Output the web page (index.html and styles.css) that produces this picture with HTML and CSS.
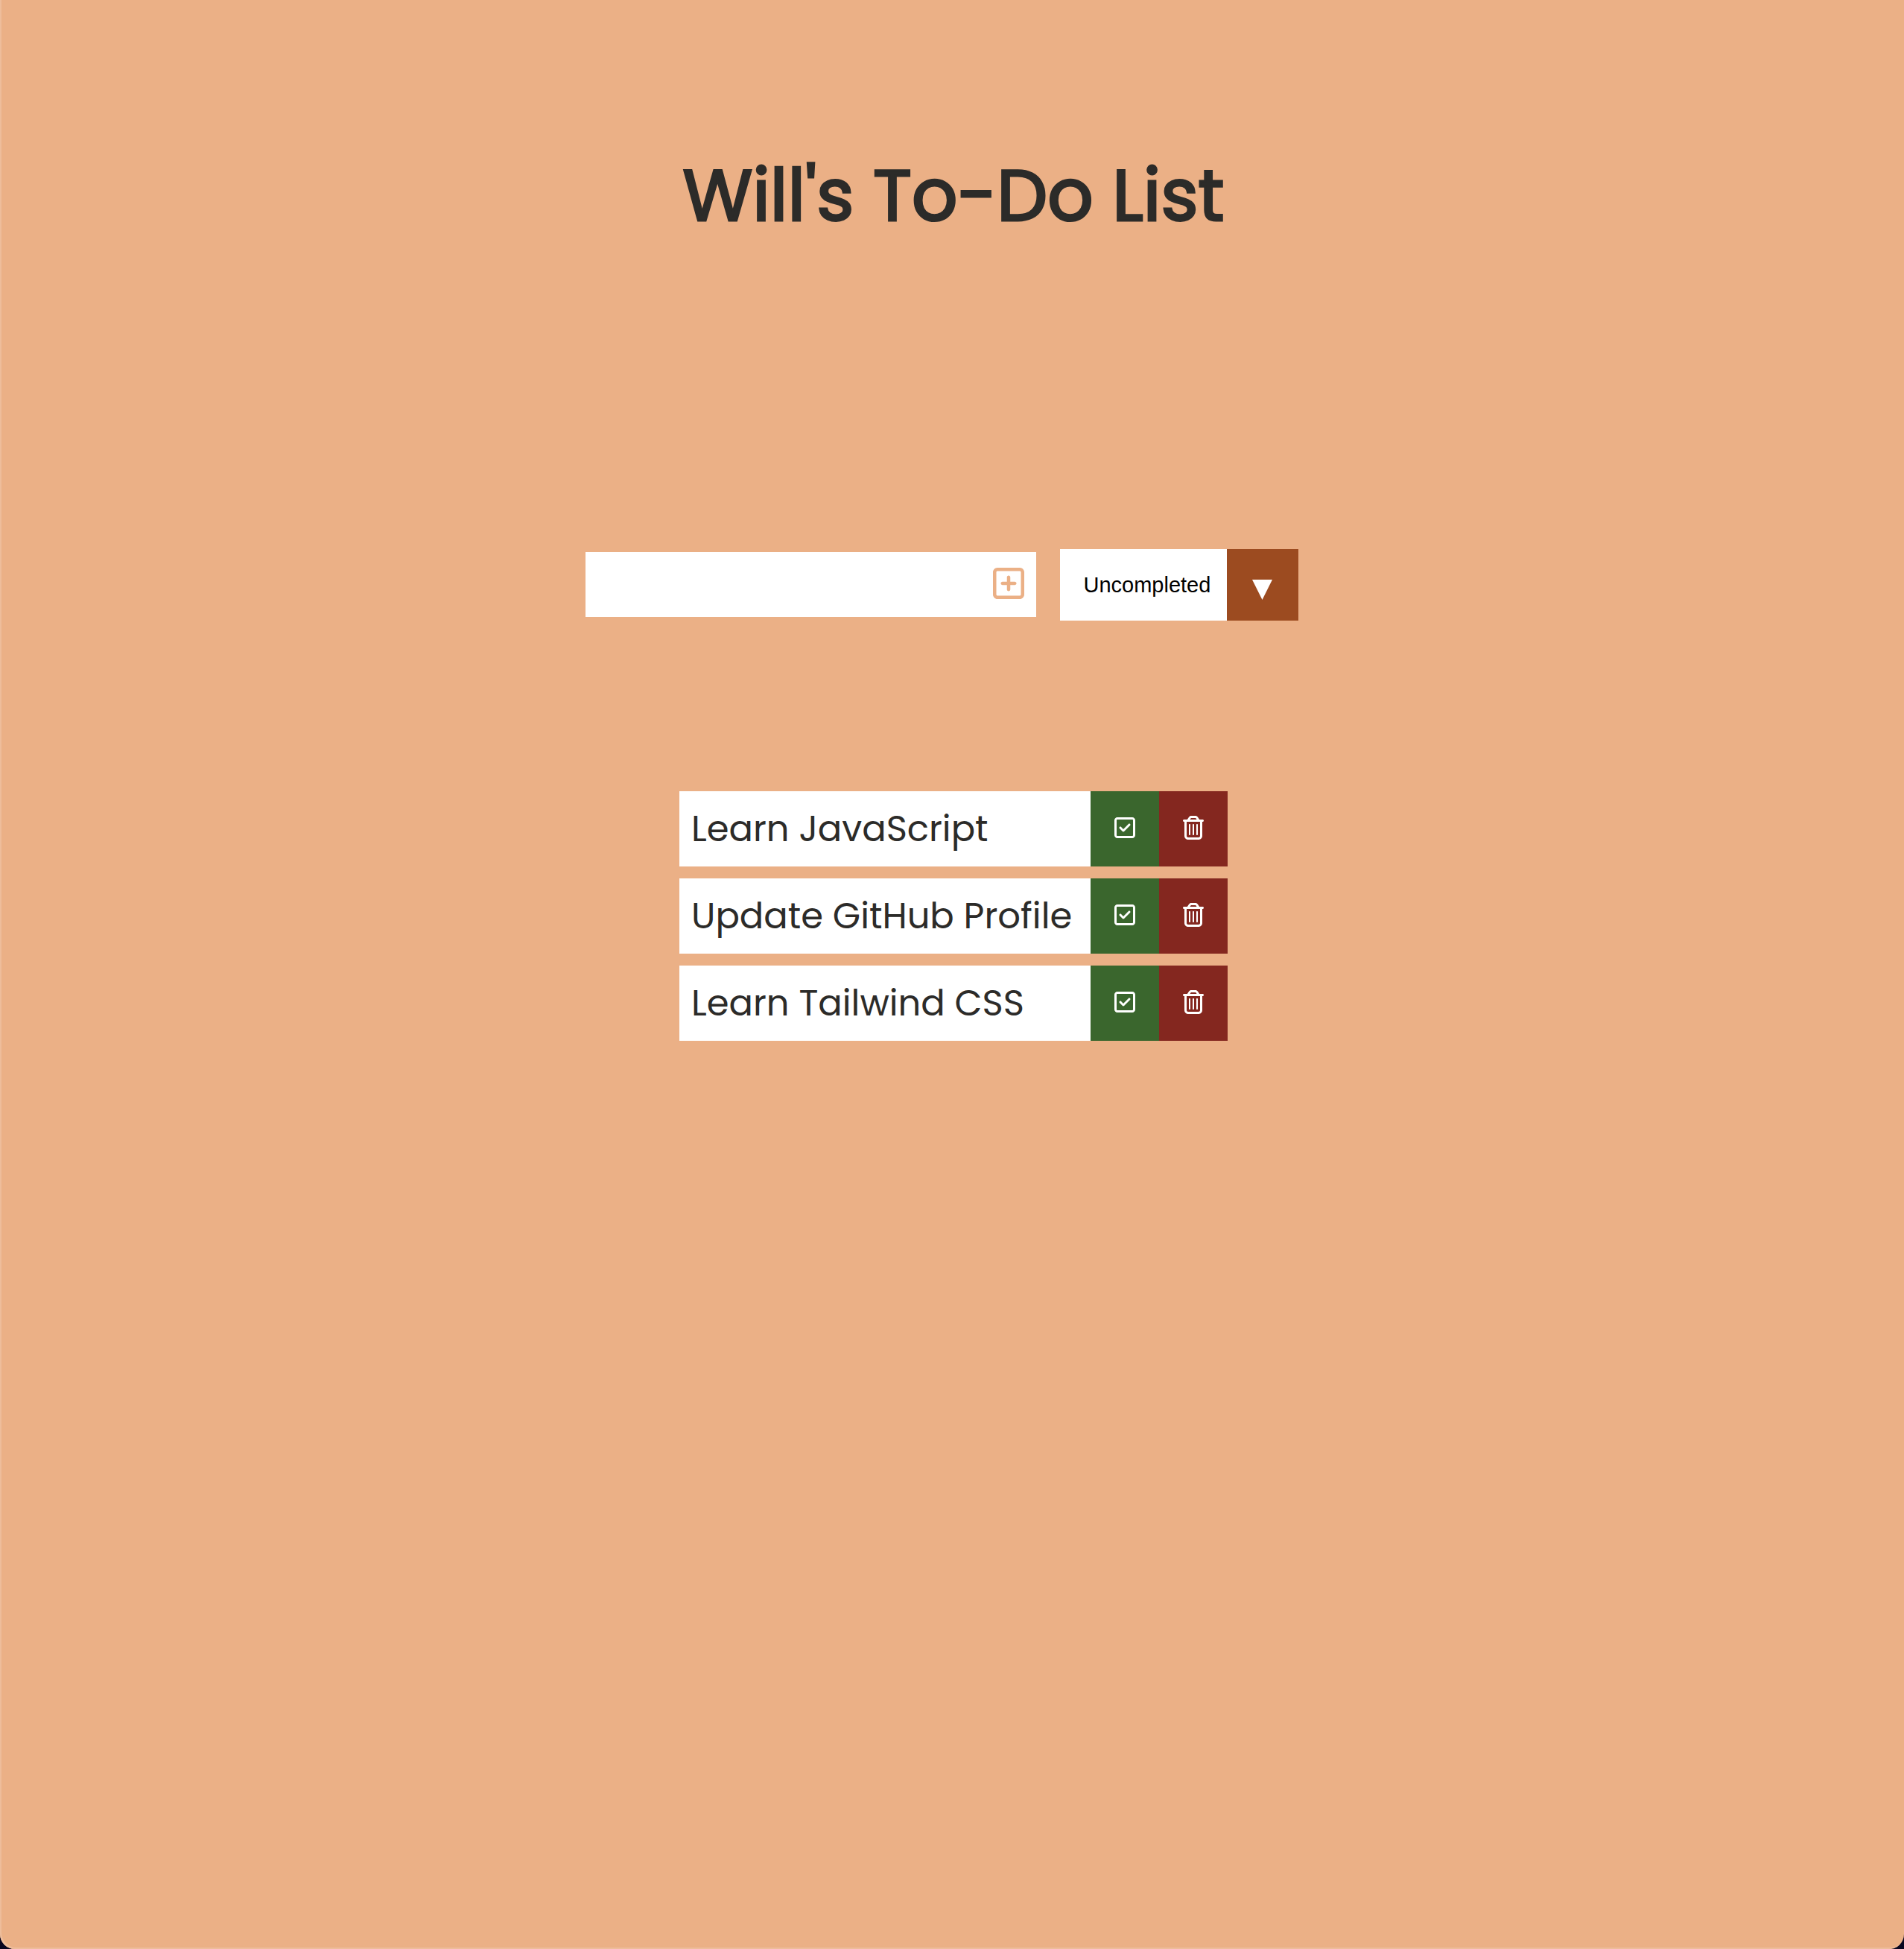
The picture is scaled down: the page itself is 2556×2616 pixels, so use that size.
FILE: index.html
```html
<!DOCTYPE html>
<html lang="en">
<head>
<meta charset="utf-8">
<meta name="viewport" content="width=device-width, initial-scale=1">
<title>Will's To-Do List</title>
<link rel="stylesheet" href="styles.css">
</head>
<body>
<svg class="sprite" aria-hidden="true">
  <symbol id="plus" viewBox="0 0 448 512"><path d="M64 80c-8.800 0-16 7.200-16 16V416c0 8.800 7.200 16 16 16H384c8.800 0 16-7.200 16-16V96c0-8.800-7.200-16-16-16H64zM0 96C0 60.700 28.700 32 64 32H384c35.300 0 64 28.700 64 64V416c0 35.300-28.700 64-64 64H64c-35.300 0-64-28.700-64-64V96zM200 344V280H136c-13.300 0-24-10.700-24-24s10.700-24 24-24h64V168c0-13.300 10.700-24 24-24s24 10.700 24 24v64h64c13.300 0 24 10.700 24 24s-10.700 24-24 24H248v64c0 13.300-10.700 24-24 24s-24-10.700-24-24z"/></symbol>
  <symbol id="check" viewBox="0 0 448 512"><path d="M64 80c-8.800 0-16 7.200-16 16V416c0 8.800 7.200 16 16 16H384c8.800 0 16-7.200 16-16V96c0-8.800-7.200-16-16-16H64zM0 96C0 60.700 28.700 32 64 32H384c35.300 0 64 28.700 64 64V416c0 35.300-28.700 64-64 64H64c-35.300 0-64-28.700-64-64V96zM337 209L209 337c-9.400 9.400-24.600 9.400-33.900 0l-64-64c-9.400-9.400-9.400-24.600 0-33.900s24.600-9.400 33.900 0l47 47L303 175c9.400-9.400 24.600-9.400 33.900 0s9.400 24.600 0 33.900z"/></symbol>
  <symbol id="trash" viewBox="0 0 448 512"><path d="M170.500 51.600L151.500 80h145l-19-28.400c-1.500-2.200-4-3.600-6.700-3.600H177.100c-2.700 0-5.200 1.300-6.700 3.600zm147-26.600L354.200 80H368h48 8c13.300 0 24 10.700 24 24s-10.700 24-24 24h-8V432c0 44.200-35.800 80-80 80H112c-44.200 0-80-35.800-80-80V128H24c-13.300 0-24-10.700-24-24S10.700 80 24 80h8H80 93.800l36.700-55.100C140.900 9.400 158.400 0 177.100 0h93.700c18.700 0 36.200 9.400 46.600 24.900zM80 128V432c0 17.700 14.300 32 32 32H336c17.700 0 32-14.300 32-32V128H80zm80 64V400c0 8.800-7.200 16-16 16s-16-7.200-16-16V192c0-8.800 7.200-16 16-16s16 7.200 16 16zm80 0V400c0 8.800-7.200 16-16 16s-16-7.200-16-16V192c0-8.800 7.200-16 16-16s16 7.200 16 16zm80 0V400c0 8.800-7.200 16-16 16s-16-7.200-16-16V192c0-8.800 7.200-16 16-16s16 7.200 16 16z"/></symbol>
</svg>
<div class="page">
  <header class="header"><h1 class="title">Will's To-Do List</h1></header>
  <form class="todo-form">
    <div class="entry">
      <input class="todo-input" type="text" aria-label="New to-do">
      <button class="add-button" type="submit" aria-label="Add"><svg class="icon icon-large"><use href="#plus"/></svg></button>
    </div>
    <div class="filter">
      <select class="filter-select" aria-label="Filter to-dos">
        <option>All</option>
        <option>Completed</option>
        <option selected>Uncompleted</option>
      </select>
      <span class="filter-arrow"><svg class="triangle" viewBox="0 0 27 27"><path d="M0 0h27L13.500 27z"/></svg></span>
    </div>
  </form>
  <main>
    <ul class="todo-list">
      <li class="todo">
        <span class="todo-text">Learn JavaScript</span>
        <button class="action complete" type="button" aria-label="Complete"><svg class="icon"><use href="#check"/></svg></button>
        <button class="action trash" type="button" aria-label="Delete"><svg class="icon"><use href="#trash"/></svg></button>
      </li>
      <li class="todo">
        <span class="todo-text">Update GitHub Profile</span>
        <button class="action complete" type="button" aria-label="Complete"><svg class="icon"><use href="#check"/></svg></button>
        <button class="action trash" type="button" aria-label="Delete"><svg class="icon"><use href="#trash"/></svg></button>
      </li>
      <li class="todo">
        <span class="todo-text">Learn Tailwind CSS</span>
        <button class="action complete" type="button" aria-label="Complete"><svg class="icon"><use href="#check"/></svg></button>
        <button class="action trash" type="button" aria-label="Delete"><svg class="icon"><use href="#trash"/></svg></button>
      </li>
    </ul>
  </main>
</div>
</body>
</html>
```
FILE: styles.css
```css
* {
  box-sizing: border-box;
  margin: 0;
  padding: 0;
}

html {
  background: #0a0620;
}

body {
  color: #2c2b29;
  font-family: Poppins, Inter, sans-serif;
}

.sprite {
  display: none;
}

.page {
  min-height: 100vh;
  padding: 0 0 64px 4px;
  background: #ebb086;
  border-radius: 0 0 20px 20px;
  box-shadow: inset 2px -2px 0 #eebd9b;
}

.header {
  display: flex;
  justify-content: center;
  padding-top: 191px;
}

.title {
  font-size: 96px;
  font-weight: 400;
  line-height: 144px;
  -webkit-text-stroke: 3px currentColor;
}

.todo-form {
  display: flex;
  justify-content: center;
  align-items: center;
  padding-top: 402px;
}

.entry {
  display: flex;
  width: 605px;
  height: 87px;
  margin-bottom: 2px;
  background: #fff;
}

.todo-input {
  flex: 1;
  min-width: 0;
  padding: 16px;
  border: 0;
  outline: 0;
  background: transparent;
  font: inherit;
  font-size: 48px;
}

button {
  display: flex;
  justify-content: center;
  border: 0;
  cursor: pointer;
}

.add-button {
  align-items: center;
  padding: 0 16px 3px;
  background: transparent;
  color: #ebb086;
}

.icon {
  width: 28px;
  height: 32px;
  fill: currentColor;
}

.icon-large {
  width: 42px;
  height: 48px;
}

.filter {
  display: flex;
  position: relative;
  width: 320px;
  height: 96px;
  margin: 0 32px;
}

.filter-select {
  width: 100%;
  padding: 0 96px 0 32px;
  border: 0;
  border-radius: 0;
  outline: 0;
  appearance: none;
  background: #fff;
  color: #000;
  font-family: Arial, "Liberation Sans", sans-serif;
  font-size: 29px;
}

.filter-arrow {
  display: flex;
  align-items: center;
  justify-content: center;
  position: absolute;
  top: 0;
  right: 0;
  width: 96px;
  height: 100%;
  padding-top: 12px;
  background: #9c4b20;
  pointer-events: none;
}

.triangle {
  width: 27px;
  height: 27px;
  fill: #fff;
}

.todo-list {
  display: flex;
  flex-direction: column;
  gap: 16px;
  width: 736px;
  max-width: 100%;
  margin: 229px auto 0;
  list-style: none;
}

.todo {
  display: flex;
  min-height: 101px;
  background: #fff;
}

.todo-text {
  flex: 1;
  align-self: center;
  padding: 0 16px;
  font-size: 48px;
  line-height: 72px;
  white-space: nowrap;
}

.action {
  align-items: center;
  width: 92px;
  padding-bottom: 3px;
  color: #fff;
}

.complete {
  background: #3a662d;
}

.trash {
  background: #84271f;
}
```
